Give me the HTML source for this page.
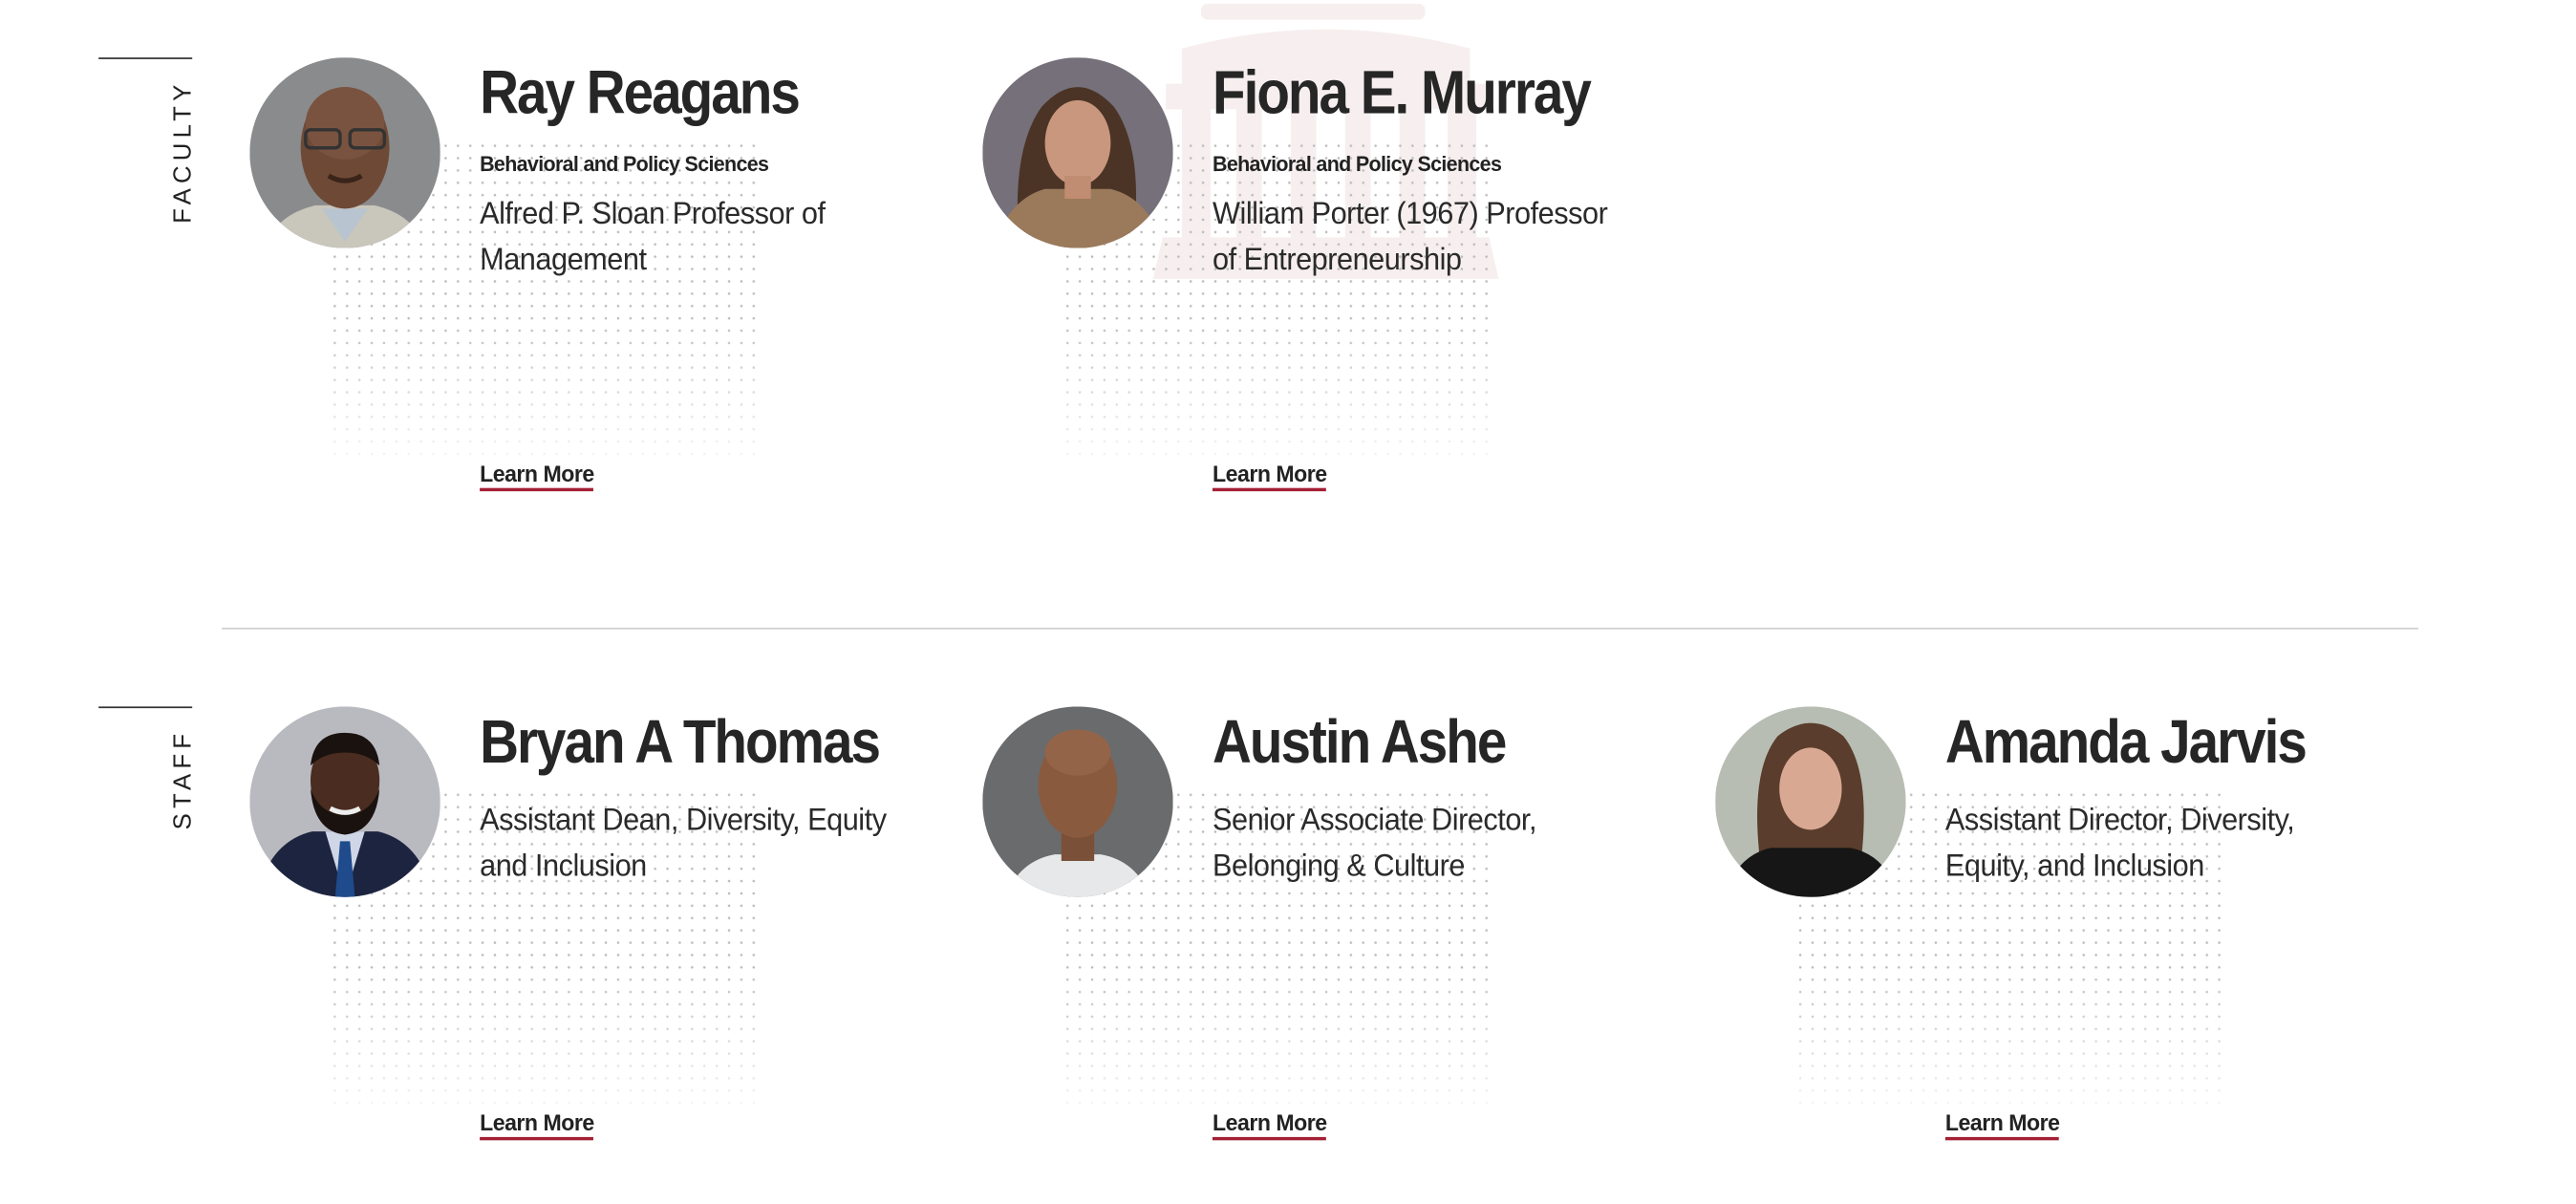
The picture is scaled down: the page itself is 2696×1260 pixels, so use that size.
<!DOCTYPE html>
<html><head><meta charset="utf-8">
<style>
html,body{margin:0;padding:0;background:#fff;width:2696px;height:1260px;overflow:hidden}
#w{position:absolute;left:0;top:0;width:1568px;height:733px;transform:scale(1.7195);transform-origin:0 0;font-family:"Liberation Sans",sans-serif;color:#222}
.hl{position:absolute;height:1px;background:#333;width:57px;left:60px}
.vt{position:absolute;font-size:15px;letter-spacing:3px;color:#222;transform:rotate(-90deg);transform-origin:0 0;white-space:nowrap}
.card{position:absolute;width:440px;height:300px}
.dots{position:absolute;left:48px;width:264px;background-image:radial-gradient(circle,#bbb 0.6px,transparent 0.9px);background-size:7.5px 7.5px;-webkit-mask-image:linear-gradient(to bottom,#000 55%,rgba(0,0,0,0.15));mask-image:linear-gradient(to bottom,#000 55%,rgba(0,0,0,0.15))}
.av{position:absolute;left:0;top:0;width:116px;height:116px;border-radius:50%;overflow:hidden}
.nm{position:absolute;left:140px;font-weight:bold;font-size:37px;letter-spacing:-1.3px;white-space:nowrap;color:#262626;transform:scaleX(0.89);transform-origin:0 0}
.dp{position:absolute;left:140px;font-weight:bold;font-size:13px;letter-spacing:-0.4px;white-space:nowrap;transform:scaleX(0.96);transform-origin:0 0}
.tt{position:absolute;left:140px;font-size:19px;line-height:28px;white-space:nowrap;color:#2a2a2a;letter-spacing:-0.3px;transform:scaleX(0.94);transform-origin:0 0}
.lm{position:absolute;left:140px;font-weight:bold;font-size:14px;letter-spacing:-0.3px;border-bottom:2px solid #a31f34;line-height:15px;padding-bottom:1px;transform:scaleX(0.96);transform-origin:0 0}
</style></head><body><div id="w">
<svg style="position:absolute;left:694px;top:0" width="226" height="172" viewBox="0 0 232 172"><g fill="#f7efef"><rect x="38" y="0" width="140" height="10" rx="4"/><path d="M26 28q90-24 180 0v30h-180z"/><rect x="16" y="50" width="200" height="16"/><rect x="26" y="66" width="18" height="80"/><rect x="60" y="66" width="16" height="80"/><rect x="94" y="66" width="16" height="80"/><rect x="128" y="66" width="16" height="80"/><rect x="162" y="66" width="16" height="80"/><rect x="192" y="66" width="18" height="80"/><path d="M14 146h204l6 26h-216z"/></g></svg>

<div class="hl" style="top:35px"></div>
<div class="vt" style="left:103px;top:136px">FACULTY</div>
<div class="hl" style="top:430px"></div>
<div class="vt" style="left:103px;top:505px">STAFF</div>
<div style="position:absolute;left:135px;top:382px;width:1337px;height:1px;background:#cfcfcf"></div>

<div class="card" style="left:152px;top:35px">
<div class="dots" style="top:50px;height:195px"></div>
<div class="av"><svg width="116" height="116"><rect width="116" height="116" fill="#8a8b8c"/><path d="M10 116q5-20 30-26h36q25 6 30 26z" fill="#c9c6bc"/><path d="M44 92l14 20 14-20z" fill="#b8c4cf"/><ellipse cx="58" cy="55" rx="27" ry="37" fill="#6e4a36"/><ellipse cx="58" cy="40" rx="24" ry="22" fill="#7a5340"/><rect x="34" y="44" width="21" height="11" rx="3" fill="none" stroke="#333" stroke-width="2"/><rect x="61" y="44" width="21" height="11" rx="3" fill="none" stroke="#333" stroke-width="2"/><path d="M48 72q10 6 20 0" stroke="#3a241a" stroke-width="3" fill="none"/></svg></div>
<div class="nm" style="top:1px">Ray Reagans</div>
<div class="dp" style="top:57px">Behavioral and Policy Sciences</div>
<div class="tt" style="top:82px">Alfred P. Sloan Professor of<br>Management</div>
<div class="lm" style="top:246px">Learn More</div>
</div>

<div class="card" style="left:598px;top:35px">
<div class="dots" style="top:50px;height:195px"></div>
<div class="av"><svg width="116" height="116"><rect width="116" height="116" fill="#76707a"/><path d="M22 110q-4-55 14-80q22-24 44 0q18 25 12 80z" fill="#4b3426"/><path d="M6 116q10-30 32-36h40q24 6 32 36z" fill="#9a7a5a"/><ellipse cx="58" cy="52" rx="20" ry="26" fill="#c9977e"/><rect x="50" y="72" width="16" height="14" fill="#c08c72"/></svg></div>
<div class="nm" style="top:1px">Fiona E. Murray</div>
<div class="dp" style="top:57px">Behavioral and Policy Sciences</div>
<div class="tt" style="top:82px">William Porter (1967) Professor<br>of Entrepreneurship</div>
<div class="lm" style="top:246px">Learn More</div>
</div>

<div class="card" style="left:152px;top:430px">
<div class="dots" style="top:50px;height:195px"></div>
<div class="av"><svg width="116" height="116"><rect width="116" height="116" fill="#b9b9c0"/><path d="M4 116q8-34 34-40h40q26 6 34 40z" fill="#1d2440"/><path d="M46 76l12 40 12-40z" fill="#cfd6e6"/><path d="M55 82h6l3 34h-12z" fill="#1f4b8c"/><ellipse cx="58" cy="45" rx="21" ry="27" fill="#4a2c20"/><path d="M37 50q2 26 21 28q19-2 21-28q-6 16-21 16q-15 0-21-16z" fill="#1a120e"/><path d="M37 36q2-20 21-20q19 0 21 20q-8-8-21-8q-13 0-21 8z" fill="#1a120e"/><path d="M49 62q9 5 18 0" stroke="#eee" stroke-width="3" fill="none"/></svg></div>
<div class="nm" style="top:1px">Bryan A Thomas</div>
<div class="tt" style="top:56px">Assistant Dean, Diversity, Equity<br>and Inclusion</div>
<div class="lm" style="top:246px">Learn More</div>
</div>

<div class="card" style="left:598px;top:430px">
<div class="dots" style="top:50px;height:195px"></div>
<div class="av"><svg width="116" height="116"><rect width="116" height="116" fill="#6a6b6d"/><path d="M14 116q8-22 30-26h28q22 4 30 26z" fill="#e7e8ea"/><rect x="48" y="72" width="20" height="22" fill="#7a5038"/><ellipse cx="58" cy="48" rx="24" ry="32" fill="#8a5a3e"/><ellipse cx="58" cy="28" rx="20" ry="14" fill="#946448"/></svg></div>
<div class="nm" style="top:1px">Austin Ashe</div>
<div class="tt" style="top:56px">Senior Associate Director,<br>Belonging &amp; Culture</div>
<div class="lm" style="top:246px">Learn More</div>
</div>

<div class="card" style="left:1044px;top:430px">
<div class="dots" style="top:50px;height:195px"></div>
<div class="av"><svg width="116" height="116"><rect width="116" height="116" fill="#b8bdb3"/><path d="M28 100q-8-60 10-82q20-16 40 0q18 22 10 82z" fill="#5a3d2c"/><path d="M4 116q10-26 30-30h48q22 4 30 30z" fill="#161616"/><ellipse cx="58" cy="50" rx="19" ry="25" fill="#d9a893"/></svg></div>
<div class="nm" style="top:1px">Amanda Jarvis</div>
<div class="tt" style="top:56px">Assistant Director, Diversity,<br>Equity, and Inclusion</div>
<div class="lm" style="top:246px">Learn More</div>
</div>
</div></body></html>
